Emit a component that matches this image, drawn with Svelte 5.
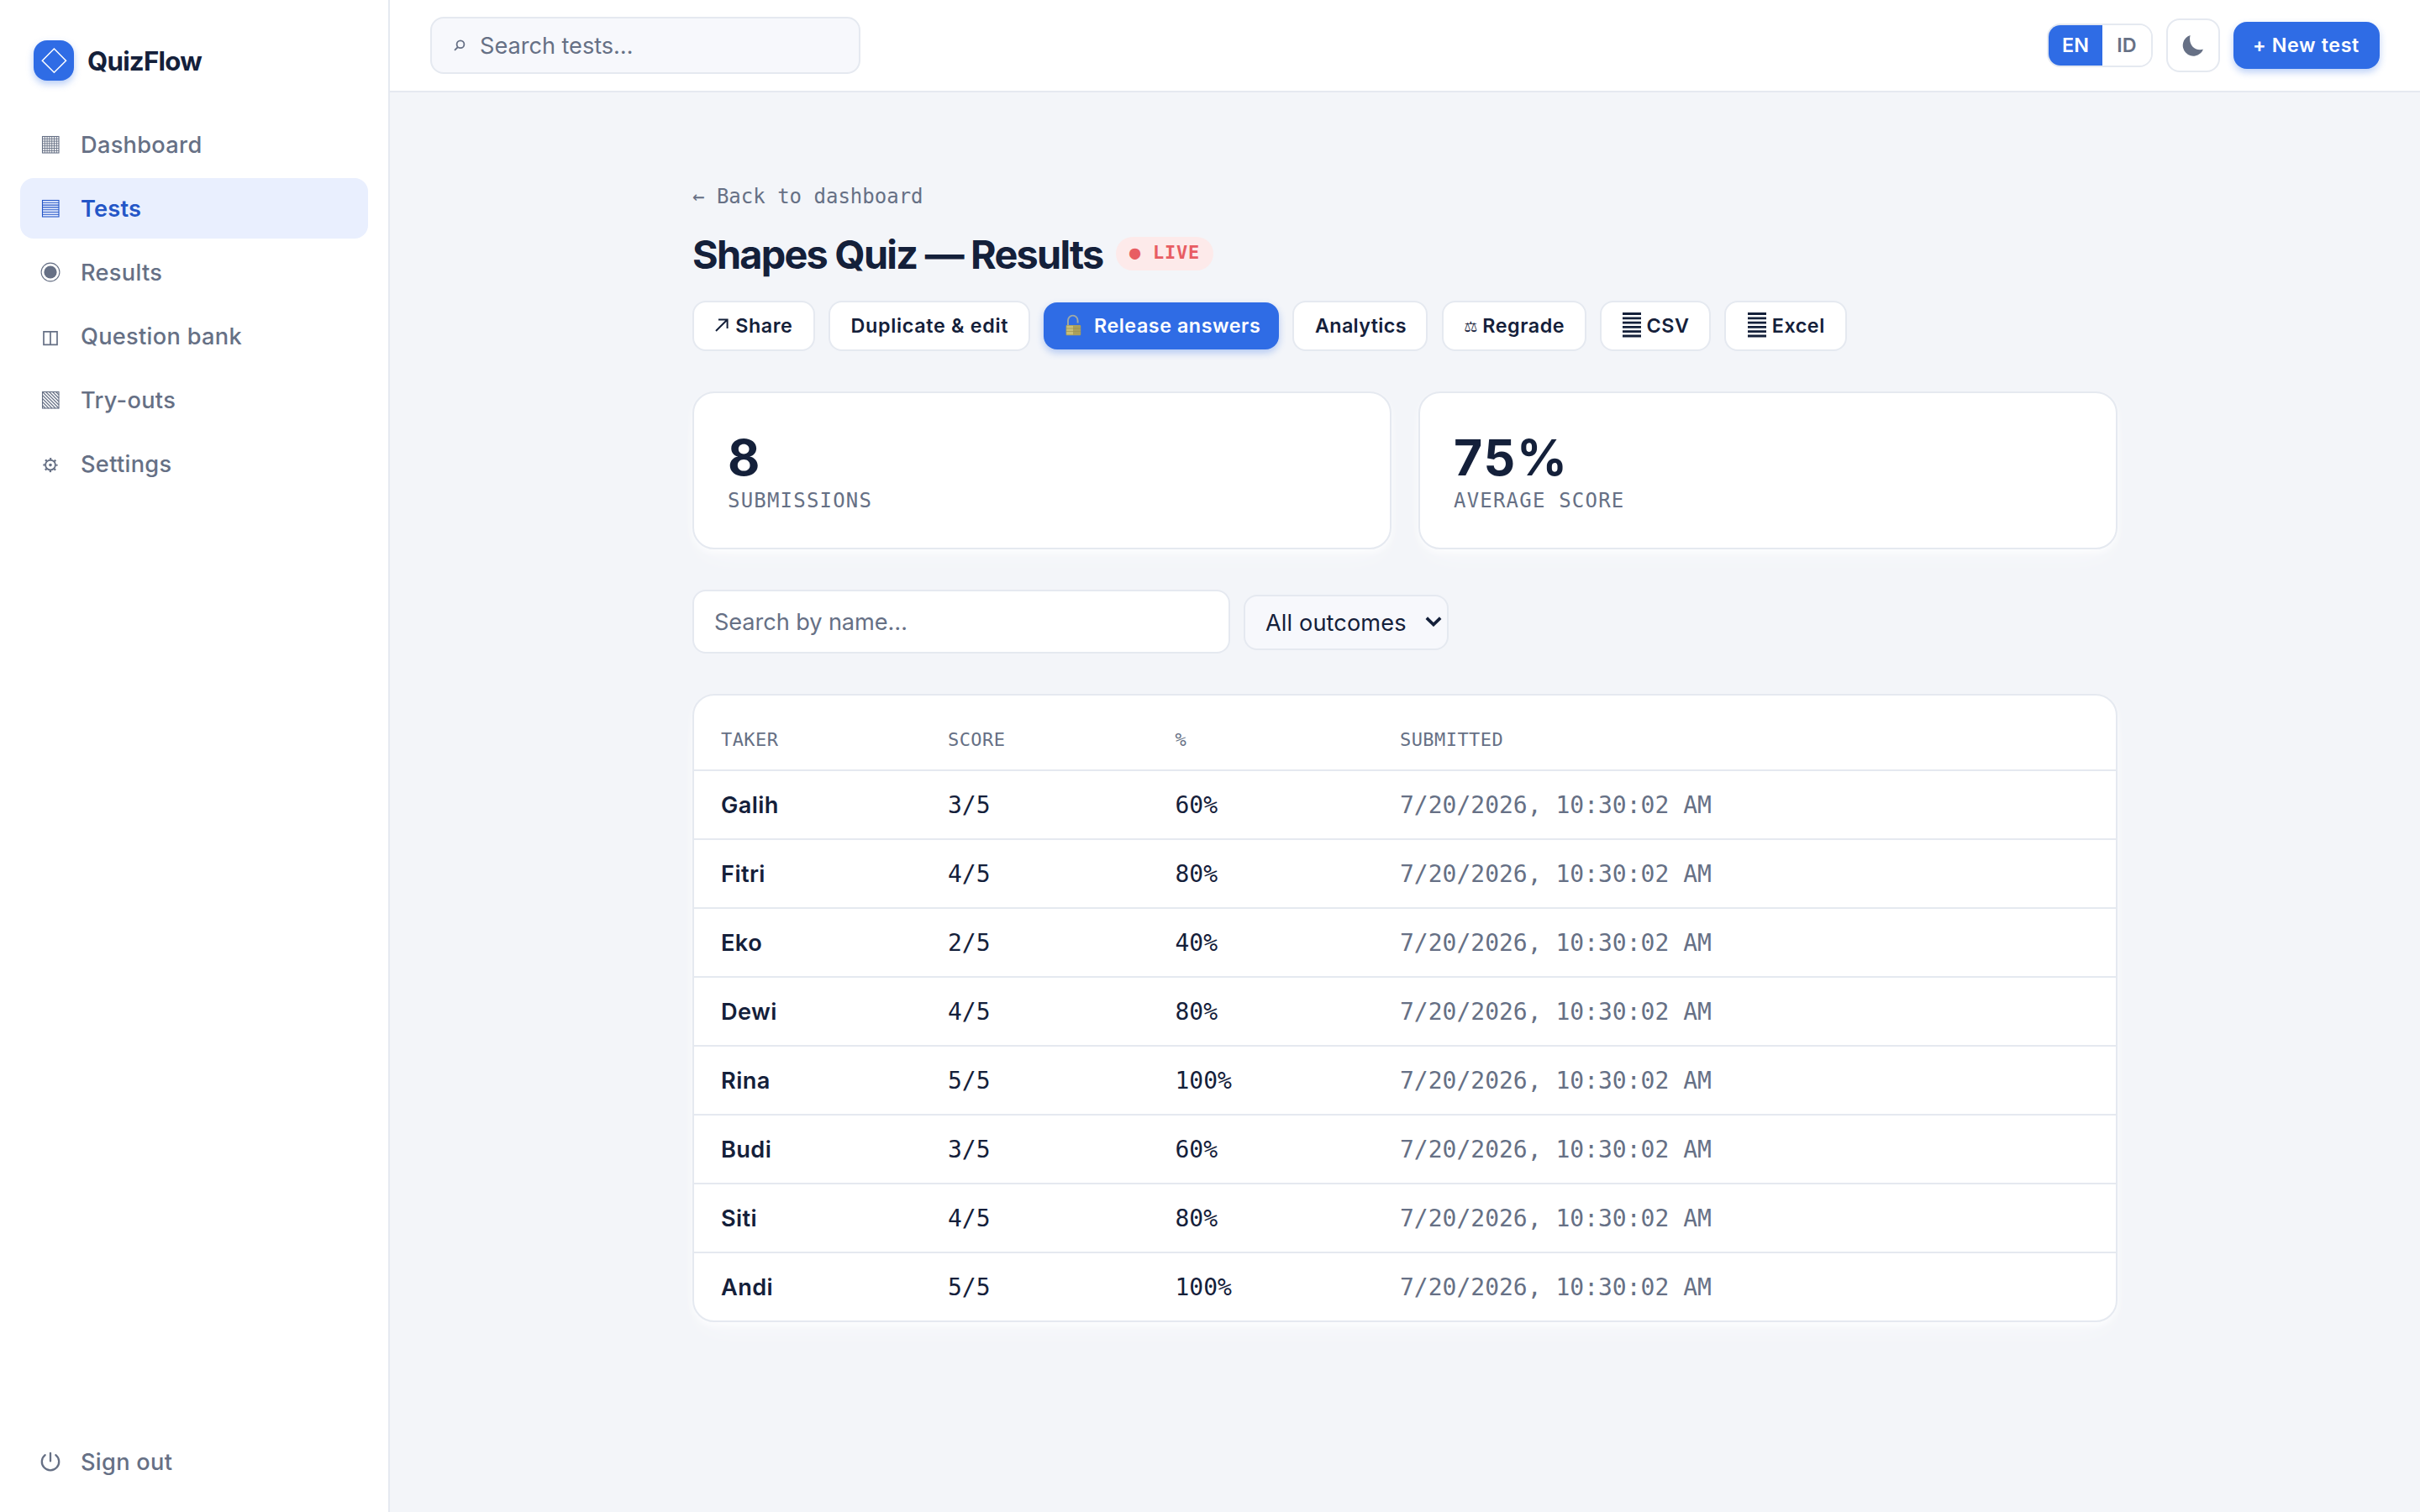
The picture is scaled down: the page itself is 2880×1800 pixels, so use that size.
<script lang="ts">
  type NavItem = { icon: string; label: string; active?: boolean };
  type Submission = { taker: string; score: number; total: number; submitted: string };

  const navItems: NavItem[] = [
    { icon: "grid", label: "Dashboard" },
    { icon: "lines", label: "Tests", active: true },
    { icon: "target", label: "Results" },
    { icon: "columns", label: "Question bank" },
    { icon: "hatch", label: "Try-outs" },
    { icon: "gear", label: "Settings" },
  ];

  const submittedAt = "7/20/2026, 10:30:02 AM";
  const submissions: Submission[] = [
    { taker: "Galih", score: 3, total: 5, submitted: submittedAt },
    { taker: "Fitri", score: 4, total: 5, submitted: submittedAt },
    { taker: "Eko", score: 2, total: 5, submitted: submittedAt },
    { taker: "Dewi", score: 4, total: 5, submitted: submittedAt },
    { taker: "Rina", score: 5, total: 5, submitted: submittedAt },
    { taker: "Budi", score: 3, total: 5, submitted: submittedAt },
    { taker: "Siti", score: 4, total: 5, submitted: submittedAt },
    { taker: "Andi", score: 5, total: 5, submitted: submittedAt },
  ];

  let lang = $state("EN");
  let search = $state("");
  let nameFilter = $state("");

  const percent = (row: { score: number; total: number }) => Math.round((row.score / row.total) * 100);
  const average = percent({
    score: submissions.reduce((sum, row) => sum + row.score, 0),
    total: submissions.reduce((sum, row) => sum + row.total, 0),
  });
  let visible = $derived(submissions.filter((row) => row.taker.toLowerCase().includes(nameFilter.toLowerCase())));
</script>

{#snippet navIcon(name: string)}
  <svg class="nav-icon" viewBox="0 0 32 32" aria-hidden="true">
    {#if name === "grid"}
      <rect x="6.5" y="6.5" width="19.5" height="19.5" />
      <path d="M9.3 6v20M12.1 6v20M14.9 6v20M17.7 6v20M20.5 6v20M23.3 6v20M6 9.3h20M6 12.1h20M6 14.9h20M6 17.7h20M6 20.5h20M6 23.3h20" stroke-width="0.9" />
    {:else if name === "lines"}
      <rect x="6.5" y="6.5" width="19.5" height="19.5" />
      <path d="M6 9.3h20M6 12.1h20M6 14.9h20M6 17.7h20M6 20.5h20M6 23.3h20" />
    {:else if name === "target"}
      <circle cx="16" cy="16" r="10.9" />
      <circle cx="16" cy="16" r="7.6" fill="currentColor" stroke="none" />
    {:else if name === "columns"}
      <path d="M8 10.8h16v15.6H8zM16 10.8v15.6" stroke-width="1.7" />
    {:else if name === "hatch"}
      <rect x="6.5" y="6.5" width="19.5" height="19.5" />
      <path d="M6.5 22.5l3.5 3.5M6.5 18.5l7.5 7.5M6.5 14.5l11.5 11.5M6.5 10.5l15.5 15.5M6.5 6.5l19.5 19.5M10.5 6.5l15.5 15.5M14.5 6.5l11.5 11.5M18.5 6.5l7.5 7.5M22.5 6.5l3.5 3.5" stroke-width="1.2" />
    {:else if name === "gear"}
      <circle cx="16" cy="17.6" r="5.9" stroke-width="1.9" />
      <circle cx="16" cy="17.6" r="7.4" stroke-width="2.4" stroke-dasharray="2.2 3.61" stroke-dashoffset="1.1" />
      <circle cx="16" cy="17.6" r="1.8" fill="currentColor" stroke="none" />
    {:else if name === "power"}
      <path d="M9.7 8.1a10.2 10.2 0 1 0 12.6 0M16 5.8v9.6" stroke-width="2.3" stroke-linecap="round" />
    {/if}
  </svg>
{/snippet}

{#snippet sheetIcon()}
  <svg class="sheet" viewBox="0 0 22 30" aria-hidden="true">
    <path d="M0 1.5h22M0 6.8h22M0 12.1h22M0 17.4h22M0 22.7h22M0 28h22" fill="none" stroke="currentColor" stroke-width="2.8" />
  </svg>
{/snippet}

<div class="app">
  <aside class="sidebar">
    <div class="brand">
      <span class="logo">
        <svg viewBox="0 0 48 48" aria-hidden="true"><path d="M24.4 10 38.5 24.2 24.4 38.3 10.3 24.2z" fill="none" stroke="#fff" stroke-width="1.5" /></svg>
      </span>
      <span class="brand-name">QuizFlow</span>
    </div>
    <nav>
      {#each navItems as item}
        <button type="button" class="nav-item" class:active={item.active}>
          {@render navIcon(item.icon)}
          <span>{item.label}</span>
        </button>
      {/each}
    </nav>
    <button type="button" class="nav-item sign-out">
      {@render navIcon("power")}
      <span>Sign out</span>
    </button>
  </aside>

  <div class="body">
    <header class="topbar">
      <label class="search">
        <svg viewBox="0 0 14 14" aria-hidden="true"><circle cx="8" cy="5.8" r="4.4" /><path d="M4.9 9 1 12.8" /></svg>
        <input type="text" placeholder="Search tests…" bind:value={search} />
      </label>
      <div class="top-actions">
        <div class="lang">
          {#each ["EN", "ID"] as code}
            <button type="button" class:on={lang === code} onclick={() => (lang = code)}>{code}</button>
          {/each}
        </div>
        <button type="button" class="theme" aria-label="Dark mode">
          <svg viewBox="0 0 25 25" aria-hidden="true"><path d="M9.6 0A12.6 12.6 0 1 0 25 16.8C14 19.4 7 10.5 9.6 0z" fill="currentColor" /></svg>
        </button>
        <button type="button" class="btn primary new-test">+ New test</button>
      </div>
    </header>

    <main>
      <a class="back" href="#dashboard">← Back to dashboard</a>
      <div class="title-row">
        <h1>Shapes Quiz — Results</h1>
        <span class="badge">● LIVE</span>
      </div>

      <div class="actions">
        <button type="button" class="btn">
          <svg class="arrow" viewBox="0 0 16 16" aria-hidden="true"><path d="M1 15 14.3 1.8M4 1.5h10.6V12" fill="none" stroke="currentColor" stroke-width="2" /></svg>
          Share
        </button>
        <button type="button" class="btn wide">Duplicate &amp; edit</button>
        <button type="button" class="btn primary">
          <svg class="lock" viewBox="0 0 24 26" aria-hidden="true">
            <path d="M6 13V7.8a5.8 6.2 0 0 1 11.6 0v2.7" fill="none" stroke="#9ea9a8" stroke-width="1.9" />
            <rect x="3.6" y="13" width="17.6" height="12.2" rx="1" fill="#aaa05c" />
            <path d="M4.4 13.8h7.6v10.5H4.4z" fill="#c9bf78" />
            <path d="M3.8 17h17.2M3.8 20.5h17.2" stroke="#9c914f" stroke-width="0.7" />
          </svg>
          Release answers
        </button>
        <button type="button" class="btn snug">Analytics</button>
        <button type="button" class="btn"><span class="scales">⚖</span>Regrade</button>
        <button type="button" class="btn">{@render sheetIcon()}CSV</button>
        <button type="button" class="btn">{@render sheetIcon()}Excel</button>
      </div>

      <section class="stats">
        <div class="card stat">
          <strong>{submissions.length}</strong>
          <span>SUBMISSIONS</span>
        </div>
        <div class="card stat">
          <strong>{average}%</strong>
          <span>AVERAGE SCORE</span>
        </div>
      </section>

      <div class="filters">
        <input type="text" placeholder="Search by name…" bind:value={nameFilter} />
        <button type="button" class="outcome" aria-haspopup="listbox">
          All outcomes
          <svg viewBox="0 0 20 12" aria-hidden="true"><path d="M1.8 1.6 10 9.6l8.2-8" fill="none" stroke="currentColor" stroke-width="3.6" /></svg>
        </button>
      </div>

      <div class="card table" role="table">
        <div class="row head" role="row">
          <span>TAKER</span><span>SCORE</span><span>%</span><span>SUBMITTED</span>
        </div>
        {#each visible as row}
          <div class="row" role="row">
            <span class="taker">{row.taker}</span>
            <span>{row.score}/{row.total}</span>
            <span>{percent(row)}%</span>
            <span class="muted">{row.submitted}</span>
          </div>
        {/each}
      </div>
    </main>
  </div>
</div>

<style>
  :global(body) {
    margin: 0;
    background: #f3f5f9;
  }

  .app {
    --ink: #14203a;
    --muted: #667085;
    --line: #e5e9f0;
    --primary: #2f6ce5;
    --field: #f7f8fc;
    --mono: "DejaVu Sans Mono", monospace;
    display: flex;
    min-height: 1800px;
    color: var(--ink);
    font-family: Inter, sans-serif;
    font-size: 27.2px;
  }

  .app * {
    box-sizing: border-box;
  }

  button,
  input {
    margin: 0;
    border: 0;
    color: inherit;
    font: inherit;
    letter-spacing: inherit;
  }

  button {
    cursor: pointer;
  }

  input {
    outline: none;
    background: transparent;
  }

  input::placeholder {
    color: var(--muted);
    opacity: 1;
  }

  .sidebar {
    flex: 0 0 464px;
    display: flex;
    flex-direction: column;
    padding: 48px 24px 24px;
    border-right: 2px solid var(--line);
    background: #fff;
  }

  .brand {
    display: flex;
    align-items: center;
    gap: 16px;
    height: 48px;
    padding-left: 16px;
    margin-bottom: 40px;
  }

  .logo {
    width: 48px;
    height: 48px;
    border-radius: 16px;
    background: var(--primary);
    box-shadow: 0 4px 8px rgba(47, 108, 229, 0.35);
  }

  .logo svg {
    display: block;
  }

  .brand-name {
    padding-top: 1px;
    font-size: 31.2px;
    font-weight: 700;
    letter-spacing: -0.75px;
  }

  nav {
    display: flex;
    flex-direction: column;
    gap: 4px;
  }

  .nav-item {
    display: flex;
    align-items: center;
    gap: 20px;
    width: 100%;
    height: 72px;
    padding: 0 20px;
    border-radius: 16px;
    background: transparent;
    color: var(--muted);
    font-weight: 500;
    letter-spacing: 0.3px;
    text-align: left;
  }

  .nav-item.active {
    background: #e9effe;
    color: #2456c7;
    font-weight: 600;
    letter-spacing: 0.2px;
  }

  .sign-out {
    margin-top: auto;
  }

  .nav-icon {
    flex: none;
    width: 32px;
    height: 32px;
    fill: none;
    stroke: currentColor;
    stroke-width: 1.1;
  }

  .body {
    flex: 1;
    min-width: 0;
  }

  .topbar {
    display: flex;
    align-items: center;
    justify-content: space-between;
    height: 110px;
    padding: 0 48px;
    border-bottom: 2px solid var(--line);
    background: #fff;
  }

  .search {
    display: flex;
    align-items: center;
    gap: 17px;
    width: 512px;
    height: 68px;
    padding: 0 26px;
    border: 2px solid var(--line);
    border-radius: 16px;
    background: var(--field);
  }

  .search svg {
    flex: none;
    width: 14px;
    height: 14px;
    fill: none;
    stroke: var(--muted);
    stroke-width: 1.8;
  }

  .search input {
    flex: 1;
    min-width: 0;
    padding: 0;
    letter-spacing: -0.05px;
  }

  .top-actions {
    display: flex;
    align-items: center;
    gap: 16px;
  }

  .lang {
    display: flex;
    width: 126px;
    height: 52px;
    border: 2px solid var(--line);
    border-radius: 16px;
    overflow: hidden;
  }

  .lang button {
    flex: 1 1 auto;
    padding: 0 14px 1px;
    background: #fff;
    color: var(--muted);
    font-size: 23.3px;
    font-weight: 600;
  }

  .lang button.on {
    flex: 0 0 64px;
    background: var(--primary);
    color: #fff;
  }

  .theme {
    display: grid;
    place-items: center;
    width: 64px;
    height: 64px;
    padding: 0 2px 0 0;
    border: 2px solid var(--line);
    border-radius: 16px;
    background: #fff;
    color: var(--muted);
  }

  .theme svg {
    width: 25px;
    height: 25px;
  }

  .btn {
    display: flex;
    align-items: center;
    justify-content: center;
    height: 60px;
    padding: 0 0 2px 1px;
    border: 2px solid var(--line);
    border-radius: 16px;
    background: #fff;
    font-size: 23.3px;
    font-weight: 600;
    letter-spacing: 0.55px;
    white-space: nowrap;
  }

  .btn.primary {
    height: 56px;
    border: 0;
    background: var(--primary);
    box-shadow: 0 4px 8px rgba(47, 108, 229, 0.32);
    color: #fff;
  }

  .btn.wide {
    letter-spacing: 0.7px;
  }

  .btn.snug {
    letter-spacing: 0.35px;
  }

  .btn.new-test {
    width: 174px;
    padding: 0 1px 2px 0;
    letter-spacing: 0.6px;
  }

  main {
    width: 1696px;
    margin: 0 auto;
    padding-top: 109px;
  }

  .back {
    display: block;
    height: 30px;
    color: var(--muted);
    font: 24px/30px var(--mono);
    text-decoration: none;
  }

  .title-row {
    display: flex;
    align-items: center;
    gap: 16px;
    height: 56px;
    margin: 25px 0 28px;
  }

  h1 {
    width: 488px;
    margin: 0;
    padding-top: 2px;
    font-size: 46.8px;
    font-weight: 700;
    letter-spacing: -1.75px;
    white-space: nowrap;
  }

  .badge {
    height: 40px;
    padding: 0 16px;
    border-radius: 20px;
    background: #fdeaea;
    color: #e85d63;
    font: 700 22px/38px var(--mono);
    letter-spacing: 0.75px;
  }

  .actions {
    display: grid;
    grid-template-columns: 145.5px 240px 280px 161px 172px 132px 146px;
    gap: 16.3px;
    align-items: center;
    margin-bottom: 48px;
  }

  .arrow {
    width: 16px;
    height: 16px;
    margin-right: 8px;
  }

  .lock {
    width: 24px;
    height: 26px;
    margin-right: 13px;
  }

  .scales {
    margin: 3px 6px 0 0;
    font: 18px/20px "DejaVu Sans", sans-serif;
    letter-spacing: 0;
  }

  .sheet {
    width: 22px;
    height: 30px;
    margin-right: 7px;
  }

  .card {
    border: 2px solid var(--line);
    border-radius: 26px;
    background: #fff;
    box-shadow:
      0 4px 8px rgba(255, 255, 255, 0.7),
      0 16px 36px -12px rgba(255, 255, 255, 0.6);
  }

  .stats {
    display: grid;
    grid-template-columns: 1fr 1fr;
    gap: 32px;
    margin-bottom: 48px;
  }

  .stat {
    display: flex;
    flex-direction: column;
    height: 188px;
    padding: 47px 40px 0;
  }

  .stat strong {
    font-size: 59px;
    line-height: 60px;
    letter-spacing: 1.8px;
  }

  .stat span {
    margin-top: 3px;
    color: var(--muted);
    font: 24px/36px var(--mono);
    letter-spacing: 1.2px;
  }

  .filters {
    display: flex;
    align-items: center;
    gap: 16px;
    margin-bottom: 48px;
  }

  .filters input {
    width: 640px;
    height: 76px;
    padding: 0 24px;
    border: 2px solid var(--line);
    border-radius: 16px;
    background: #fff;
    letter-spacing: -0.1px;
  }

  .outcome {
    display: flex;
    align-items: center;
    justify-content: space-between;
    width: 244px;
    height: 66px;
    margin-top: 2px;
    padding: 1px 6px 0 24px;
    border: 2px solid var(--line);
    border-radius: 16px;
    background: var(--field);
    letter-spacing: 0.1px;
  }

  .outcome svg {
    width: 20px;
    height: 12px;
    margin-bottom: 3px;
  }

  .table {
    overflow: hidden;
    padding-top: 16px;
  }

  .row {
    display: grid;
    grid-template-columns: 270px 270.5px 267.5px 1fr;
    align-items: center;
    height: 82px;
    padding: 0 32px;
    border-bottom: 2px solid var(--line);
    font-family: var(--mono);
    font-size: 28px;
  }

  .row.head {
    height: 74px;
    color: var(--muted);
    font-size: 22px;
    letter-spacing: 0.44px;
  }

  .row:last-child {
    height: 80px;
    border-bottom: 0;
  }

  .taker {
    font-family: Inter, sans-serif;
    font-size: 27.2px;
    font-weight: 600;
    letter-spacing: 0.4px;
  }

  .muted {
    color: var(--muted);
  }
</style>
